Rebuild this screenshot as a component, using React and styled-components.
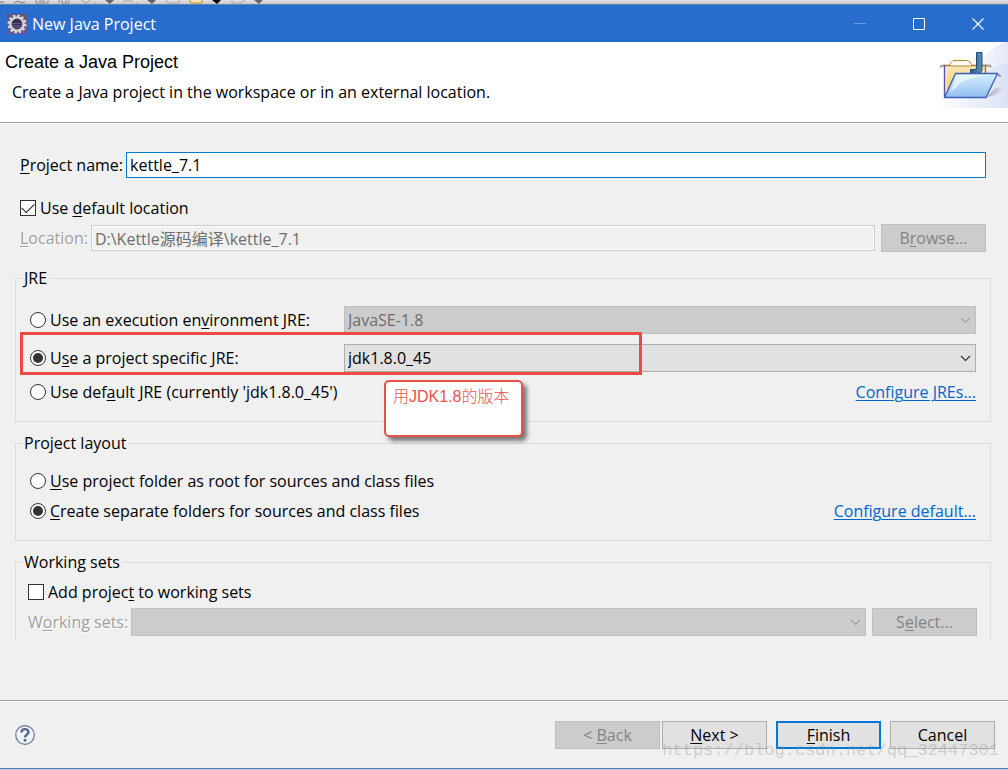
import React from 'react';
import styled, { createGlobalStyle } from 'styled-components';

const GlobalStyle = createGlobalStyle`
  * {
    box-sizing: border-box;
  }
  body {
    margin: 0;
    background: #f0f0f0;
    color: #000;
    font-family: 'Open Sans', 'Noto Sans CJK SC', sans-serif;
    font-size: 16px;
    line-height: 22px;
  }
  button,
  input,
  select {
    font: inherit;
    color: inherit;
    margin: 0;
  }
  u {
    text-underline-offset: 2px;
    text-decoration-thickness: 1px;
  }
`;

const Dialog = styled.div`
  display: flex;
  flex-direction: column;
  min-height: 100vh;
  border-bottom: 1px solid #c9c6c4;
`;

const ToolbarEdge = styled.div`
  height: 5px;
  background: linear-gradient(#e2e2e2, #cbc9c7);
  border-bottom: 1px solid #5f83b5;
  overflow: hidden;
  svg {
    display: block;
  }
`;

const TitleBar = styled.header`
  display: flex;
  align-items: center;
  height: 37px;
  padding: 0 1px 0 7px;
  gap: 5px;
  background: #286dcd;
  color: #fff;
`;

const TitleText = styled.span`
  flex: 1;
`;

const WindowButtons = styled.div`
  display: flex;
`;

const WindowButton = styled.button`
  display: flex;
  align-items: center;
  justify-content: center;
  width: 59px;
  height: 37px;
  padding: 0;
  border: 0;
  background: transparent;
  color: ${(props) => (props.disabled ? '#6c9be0' : '#fff')};
`;

const Banner = styled.div`
  display: flex;
  justify-content: space-between;
  height: 81px;
  background: #fff;
  border-bottom: 1px solid #a0a0a0;
  h1 {
    margin: 9px 0 8px 5px;
    font-family: 'Liberation Sans', sans-serif;
    font-size: 18px;
    font-weight: 400;
    line-height: 22px;
  }
  p {
    margin: 0 0 0 12px;
  }
`;

const Form = styled.form`
  display: flex;
  flex-direction: column;
  flex: 1;
`;

const Main = styled.main`
  flex: 1;
  border-top: 1px solid #fff;
  padding: 28px 17px 0 15px;
`;

const Fields = styled.div`
  padding: 0 5px;
`;

const Button = styled.button`
  width: 105px;
  height: 28px;
  padding: 0;
  border: ${(props) => (props.$primary ? '2px solid #0078d7' : '1px solid #adadad')};
  background: #e1e1e1;
  &:disabled {
    border-color: #bfbfbf;
    background: #ccc;
    color: #838383;
  }
`;

const Row = styled.div`
  display: flex;
  align-items: center;
  gap: 3px;
  margin-top: ${(props) => props.$top || 0}px;
  min-height: 22px;
  ${Button} {
    margin-left: 3px;
  }
`;

const FieldLabel = styled.label`
  white-space: nowrap;
  ${(props) =>
    props.$disabled && 'color: #a0a0a0; text-shadow: 1px 1px 0 #fff;'}
`;

const TextInput = styled.input`
  flex: 1;
  min-width: 0;
  height: 26px;
  padding: 0 3px;
  border: 1px solid #0078d7;
  background: #fff;
  outline: 0;
  &:disabled {
    border-color: #ccc;
    background: #f0f0f0;
    box-shadow: inset 0 0 0 1px #fff;
    color: #6d6d6d;
  }
`;

const Choice = styled.label`
  display: flex;
  align-items: center;
  gap: 4px;
  white-space: nowrap;
`;

const CheckInput = styled.input`
  appearance: none;
  display: grid;
  place-items: center;
  width: 16px;
  height: 16px;
  border: 1px solid #333;
  background: #fff;
  &:checked::after {
    content: '';
    width: 11px;
    height: 6px;
    margin-bottom: 4px;
    border: solid #222;
    border-width: 0 0 1px 1px;
    transform: rotate(-45deg);
  }
`;

const RadioInput = styled.input`
  appearance: none;
  display: grid;
  place-items: center;
  width: 16px;
  height: 16px;
  border: 1px solid #333;
  border-radius: 50%;
  background: #fff;
  &:checked::after {
    content: '';
    width: 10px;
    height: 10px;
    border-radius: 50%;
    background: #333;
  }
`;

const Group = styled.fieldset`
  min-width: 0;
  margin: ${(props) => props.$gap || 10}px 0 0;
  padding: 0;
  border: 1px solid #dcdcdc;
  ${(props) => props.$open && 'border-bottom: 0;'}
  legend {
    margin-left: 6px;
    padding: 0 2px;
  }
`;

const GroupBody = styled.div`
  position: relative;
  padding: ${(props) => props.$pad};
`;

const JreRow = styled.div`
  display: grid;
  grid-template-columns: 314px 1fr;
  align-items: center;
  margin-bottom: ${(props) => props.$gap}px;
`;

const SplitRow = styled(Row)`
  justify-content: space-between;
`;

const Link = styled.a`
  color: #0066cc;
  text-underline-offset: 2px;
  text-decoration-thickness: 1px;
`;

const SelectBox = styled.div`
  position: relative;
  flex: 1;
  svg {
    position: absolute;
    right: 5px;
    top: 11px;
    pointer-events: none;
    color: ${(props) => (props.$disabled ? '#a0a0a0' : '#333')};
  }
`;

const Select = styled.select`
  appearance: none;
  display: block;
  width: 100%;
  height: 28px;
  padding: 0 24px 0 3px;
  border: 1px solid #adadad;
  border-radius: 0;
  background: #e1e1e1;
  &:disabled {
    border-color: #bfbfbf;
    background: #ccc;
    color: #6d6d6d;
    opacity: 1;
  }
`;

const Highlight = styled.div`
  position: absolute;
  z-index: 1;
  left: 4px;
  top: 43px;
  width: 622px;
  height: 43px;
  border: 3px solid #ec4b45;
  pointer-events: none;
`;

const Callout = styled.div`
  position: absolute;
  z-index: 1;
  left: 368px;
  top: 91px;
  width: 139px;
  height: 57px;
  padding: 4px 7px;
  border: 2px solid #ea4f4a;
  border-radius: 5px;
  background: #fff;
  box-shadow: 4px 4px 4px #777;
  color: #e8524c;
  font-family: 'Liberation Sans', 'Noto Sans CJK SC', sans-serif;
  font-weight: 300;
  white-space: nowrap;
`;

const Footer = styled.footer`
  position: relative;
  display: flex;
  align-items: center;
  justify-content: space-between;
  padding: 20px 13px 19px 15px;
  border-top: 1px solid #a0a0a0;
  border-bottom: 1px solid #4f82c4;
  box-shadow: inset 0 1px 0 #fff;
`;

const HelpButton = styled.button`
  width: 20px;
  height: 20px;
  padding: 0;
  border: 0;
  background: transparent;
  svg {
    display: block;
  }
`;

const Actions = styled.div`
  display: flex;
  gap: 9px;
`;

const StepButtons = styled.div`
  display: flex;
  gap: 2px;
`;

const Watermark = styled.span`
  position: absolute;
  right: 9px;
  bottom: 6px;
  color: rgba(150, 150, 140, 0.4);
  font-family: 'Liberation Mono', monospace;
  font-size: 17px;
  pointer-events: none;
`;

function Chevron() {
  return (
    <svg width="11" height="7" viewBox="0 0 11 7" fill="none" stroke="currentColor">
      <path d="M1 1l4.5 4.5L10 1" strokeWidth="1.2" />
    </svg>
  );
}

function Dropdown({ id, label, value, disabled }) {
  return (
    <SelectBox $disabled={disabled}>
      <Select id={id} aria-label={label} disabled={disabled} defaultValue={value}>
        <option value={value}>{value}</option>
      </Select>
      <Chevron />
    </SelectBox>
  );
}

function Radio({ name, checked, children }) {
  return (
    <Choice>
      <RadioInput type="radio" name={name} defaultChecked={checked} />
      <span>{children}</span>
    </Choice>
  );
}

function Checkbox({ checked, children }) {
  return (
    <Choice>
      <CheckInput type="checkbox" defaultChecked={checked} />
      <span>{children}</span>
    </Choice>
  );
}

function ToolbarIcons() {
  return (
    <svg width="280" height="4" viewBox="0 0 280 4" fill="none">
      <path d="M0 2h4M14 3l4-2 3 2 4-1" stroke="#777" />
      <path d="M36 0v3h12V0M39 1h6M59 0v3M62 0v3h7V0M65 1h2" stroke="#8a8a8a" />
      <path d="M81 0l5 3 5-3M94 3h2M123 2l5-2 5 2M136 3h2" stroke="#aaa08e" />
      <path d="M105 0h9l-4 4zM147 0h9l-4 4zM254 0h9l-4 4z" fill="#666" />
      <path d="M212 0h9l-4 4z" fill="#000" />
      <path d="M167 0v2l2 1h10V0M232 0v3h9l4-3" stroke="#aaa" />
      <path d="M190 0v2l2 1h10V0" fill="#f8e5b5" stroke="#bd8a20" />
    </svg>
  );
}

function EclipseIcon() {
  return (
    <svg width="20" height="20" viewBox="0 0 20 20">
      <rect width="20" height="20" fill="#66559a" />
      <path d="M0 0h20v9H0z" fill="#60567c" />
      <circle cx="10" cy="10" r="8.3" fill="none" stroke="#dedbd6" strokeWidth="2.4" strokeDasharray="2.4 1.95" />
      <circle cx="10" cy="10" r="6.6" fill="#37305a" stroke="#d8d5cf" strokeWidth="2.4" />
      <path d="M5 9.500h10M5 11.500h10" stroke="#5d5488" />
      <path d="M6 13.500h8" stroke="#6a5a9c" />
    </svg>
  );
}

function FolderArt() {
  return (
    <svg width="72" height="66" viewBox="0 0 72 66" fill="none">
      <defs>
        <linearGradient id="sky" x1="0" x2="1">
          <stop offset="0" stopColor="#fff" />
          <stop offset="1" stopColor="#dbe2f6" />
        </linearGradient>
        <linearGradient id="glow" x1="0" x2="1">
          <stop offset="0" stopColor="#f5f7fd" />
          <stop offset="1" stopColor="#e4eaf8" />
        </linearGradient>
        <linearGradient id="front" x1="0" y1="0" x2="0" y2="1">
          <stop offset="0" stopColor="#d4effe" />
          <stop offset="1" stopColor="#94bdf0" />
        </linearGradient>
        <linearGradient id="back" x1="0" y1="0" x2="0" y2="1">
          <stop offset="0" stopColor="#fbe9b5" />
          <stop offset="1" stopColor="#f0c45d" />
        </linearGradient>
        <linearGradient id="letter" x1="0" x2="1">
          <stop offset="0" stopColor="#225b88" />
          <stop offset="1" stopColor="#6590b5" />
        </linearGradient>
        <linearGradient id="shade" x1="0" x2="1">
          <stop offset="0" stopColor="#b3a9c2" />
          <stop offset="1" stopColor="#dde2f3" />
        </linearGradient>
      </defs>
      <path d="M0 66C10 55 22 60 32 46 46 24 58 19 72 20v46z" fill="url(#sky)" />
      <path d="M43 30C46 13 58 2 72 0v22c-10 0-18 5-26 10z" fill="url(#glow)" />
      <path d="M51 55l8-9c4-1 8 0 9 0-2 4-10 8-17 9z" fill="url(#shade)" />
      <path d="M4.500 25.500q0-2 4-2M49 23.500h4q1.500 0 1.500 2M15.500 34.500q0-2 4-2M61 32.500q3 0 3 2.500" stroke="#9c9c9c" strokeWidth="2" />
      <path d="M8.500 55V23.500h41V54z" fill="url(#back)" />
      <path d="M10 53V25h4" stroke="#fff8dc" />
      <path d="M8.500 55V23" stroke="#5356a8" strokeWidth="1.400" />
      <path d="M8.500 23.500h5M35 23.500h14.500V33" stroke="#a07626" strokeWidth="1.400" />
      <path d="M13 24l1.500-3L17 18.500h14.500l3 2 1.500 3.500z" fill="#fffaf0" stroke="#b18a37" />
      <path d="M40.500 10.500H46V27q0 5-5 5h-6.500v-4.500h4q2 0 2-2z" fill="url(#letter)" stroke="#174c7a" />
      <path d="M19.500 31.500H61.500L50 55.500H8.500z" fill="url(#front)" />
      <path d="M21 33h36C36 35 25 38 20 46l-6 4z" fill="#effaff" opacity=".7" />
      <path d="M19.500 31.500H61.500L50 55.500H8.500z" stroke="#3d5fb5" strokeWidth="1.300" />
    </svg>
  );
}

function HelpIcon() {
  return (
    <svg width="20" height="20" viewBox="0 0 20 20" fill="none">
      <circle cx="10" cy="10" r="9.300" fill="#f2f3f4" stroke="#637695" strokeWidth="1.200" />
      <path d="M6.500 7.500C6.500 3 13.500 3.200 13.500 7c0 2.600-3.500 2.400-3.500 5.500" stroke="#50658b" strokeWidth="2.400" />
      <path d="M8.700 14h2.600v2.500H8.700z" fill="#50658b" />
    </svg>
  );
}

export default function App() {
  return (
    <>
      <GlobalStyle />
      <Dialog>
        <ToolbarEdge>
          <ToolbarIcons />
        </ToolbarEdge>
        <TitleBar>
          <EclipseIcon />
          <TitleText>New Java Project</TitleText>
          <WindowButtons>
            <WindowButton aria-label="Minimize" disabled>
              <svg width="12" height="12" stroke="currentColor">
                <path d="M0 5.500h12" />
              </svg>
            </WindowButton>
            <WindowButton aria-label="Maximize">
              <svg width="12" height="12" fill="none" stroke="currentColor">
                <path d="M.5.5h11v11H.5z" />
              </svg>
            </WindowButton>
            <WindowButton aria-label="Close">
              <svg width="12" height="12" stroke="currentColor" strokeWidth="1.200">
                <path d="M.5.5l11 11M11.500.5l-11 11" />
              </svg>
            </WindowButton>
          </WindowButtons>
        </TitleBar>
        <Banner>
          <div>
            <h1>Create a Java Project</h1>
            <p>Create a Java project in the workspace or in an external location.</p>
          </div>
          <FolderArt />
        </Banner>
        <Form onSubmit={(e) => e.preventDefault()}>
          <Main>
            <Fields>
              <Row>
                <FieldLabel htmlFor="project-name">
                  <u>P</u>roject name:
                </FieldLabel>
                <TextInput id="project-name" defaultValue="kettle_7.1" />
              </Row>
              <Row $top={19}>
                <Checkbox checked>
                  Use <u>d</u>efault location
                </Checkbox>
              </Row>
              <Row $top={5}>
                <FieldLabel htmlFor="location" $disabled>
                  <u>L</u>ocation:
                </FieldLabel>
                <TextInput
                  id="location"
                  defaultValue="D:\Kettle源码编译\kettle_7.1"
                  disabled
                />
                <Button type="button" disabled>
                  B<u>r</u>owse...
                </Button>
              </Row>
            </Fields>

            <Group $gap={15}>
              <legend>JRE</legend>
              <GroupBody $pad="17px 14px 18px">
                <JreRow $gap={10}>
                  <Radio name="jre">
                    Use an execution en<u>v</u>ironment JRE:
                  </Radio>
                  <Dropdown label="Execution environment" value="JavaSE-1.8" disabled />
                </JreRow>
                <JreRow $gap={9}>
                  <Radio name="jre" checked>
                    U<u>s</u>e a project specific JRE:
                  </Radio>
                  <Dropdown label="Project specific JRE" value="jdk1.8.0_45" />
                </JreRow>
                <SplitRow>
                  <Radio name="jre">
                    Use def<u>a</u>ult JRE (currently 'jdk1.8.0_45')
                  </Radio>
                  <Link href="#jres">Configure JREs...</Link>
                </SplitRow>
                <Highlight />
                <Callout>用JDK1.8的版本</Callout>
              </GroupBody>
            </Group>

            <Group>
              <legend>Project layout</legend>
              <GroupBody $pad="16px 14px 18px">
                <Row>
                  <Radio name="layout">
                    <u>U</u>se project folder as root for sources and class files
                  </Radio>
                </Row>
                <SplitRow $top={8}>
                  <Radio name="layout" checked>
                    <u>C</u>reate separate folders for sources and class files
                  </Radio>
                  <Link href="#layout">Configure default...</Link>
                </SplitRow>
              </GroupBody>
            </Group>

            <Group $open>
              <legend>Working sets</legend>
              <GroupBody $pad="8px 13px 4px 12px">
                <Row>
                  <Checkbox>
                    Add projec<u>t</u> to working sets
                  </Checkbox>
                </Row>
                <Row $top={5}>
                  <FieldLabel htmlFor="working-sets" $disabled>
                    W<u>o</u>rking sets:
                  </FieldLabel>
                  <Dropdown id="working-sets" value="" disabled />
                  <Button type="button" disabled>
                    S<u>e</u>lect...
                  </Button>
                </Row>
              </GroupBody>
            </Group>
          </Main>
          <Footer>
            <HelpButton type="button" aria-label="Help">
              <HelpIcon />
            </HelpButton>
            <Actions>
              <StepButtons>
                <Button type="button" disabled>
                  &lt; <u>B</u>ack
                </Button>
                <Button type="button">
                  <u>N</u>ext &gt;
                </Button>
              </StepButtons>
              <Button type="submit" $primary>
                <u>F</u>inish
              </Button>
              <Button type="button">Cancel</Button>
            </Actions>
            <Watermark>https://blog.csdn.net/qq_32447301</Watermark>
          </Footer>
        </Form>
      </Dialog>
    </>
  );
}
